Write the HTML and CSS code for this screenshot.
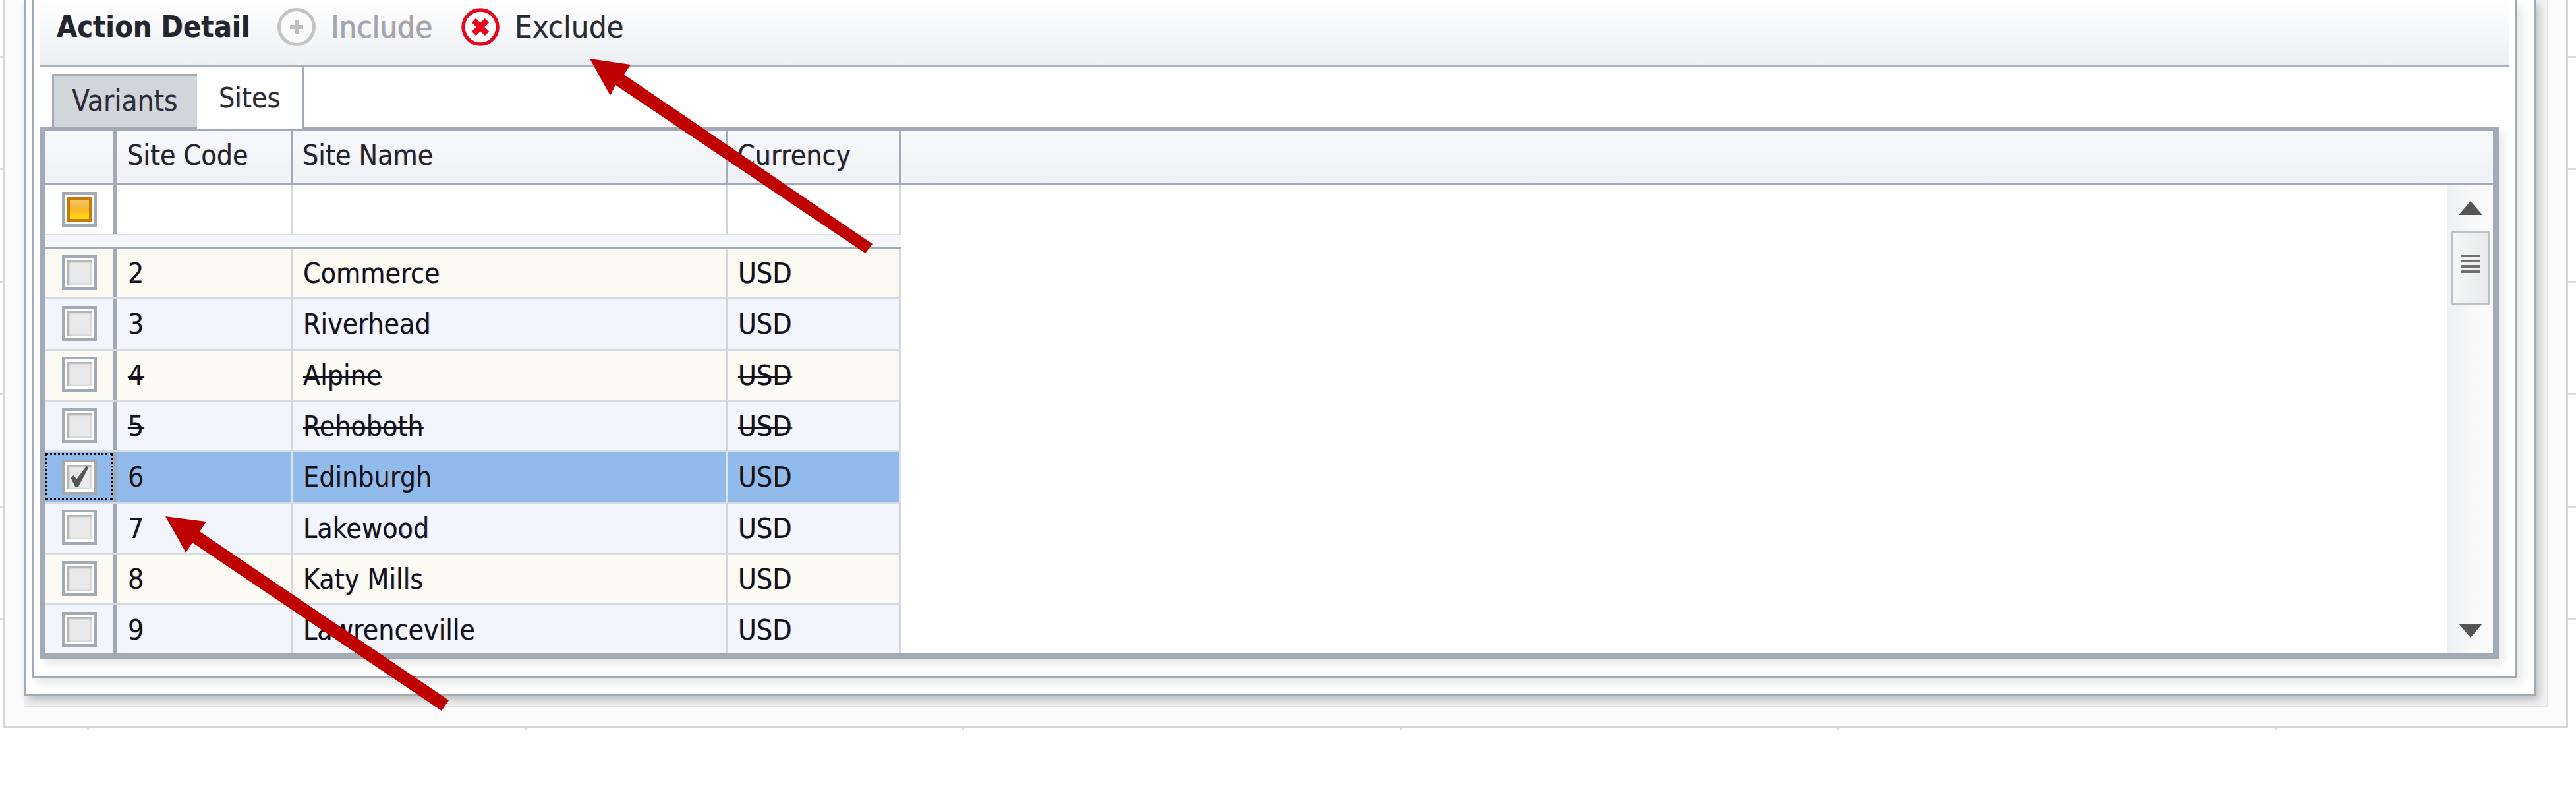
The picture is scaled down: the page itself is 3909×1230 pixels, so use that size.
FILE: index.html
```html
<!DOCTYPE html>
<html lang="en">
<head>
    <meta charset="UTF-8">
    <title>Action Detail</title>
    <link rel="stylesheet" href="styles.css">
</head>
<body>
    <div class="page">
        <div class="frame">
            <div class="band">
                <div class="panelOuter">
                    <div class="panelInner">
                        <div class="toolbar">
                            <span class="toolbarTitle">Action Detail</span>
                            <span class="toolBtn disabled">
                                <svg class="toolIcon" viewBox="0 0 60 60">
                                    <circle cx="30" cy="30" r="26.5" fill="#fafafa" stroke="#c4c4c4" stroke-width="5"/>
                                    <path d="M30 20v20M20 30h20" stroke="#bdbdbd" stroke-width="6" fill="none"/>
                                </svg>
                                Include
                            </span>
                            <span class="toolBtn">
                                <svg class="toolIcon" viewBox="0 0 60 60">
                                    <circle cx="30" cy="30" r="26" fill="#fff" stroke="#e8061f" stroke-width="5.5"/>
                                    <path d="M20 20l20 20M40 20l-20 20" stroke="#e8061f" stroke-width="9" fill="none"/>
                                </svg>
                                Exclude
                            </span>
                        </div>
                        <div class="tabs">
                            <div class="tab">Variants</div>
                            <div class="tab active">Sites</div>
                        </div>
                        <div class="grid">
                            <div class="gridHead">
                                <div class="headCell indicator"></div>
                                <div class="headCell code">Site Code</div>
                                <div class="headCell name">Site Name</div>
                                <div class="headCell currency">Currency</div>
                                <div class="headFill"></div>
                            </div>
                            <div class="gridBody">
                                <div class="rows">
                                    <div class="row filterRow">
                                        <div class="cell indicator"><span class="check mixed"></span></div>
                                        <div class="cell code"></div>
                                        <div class="cell name"></div>
                                        <div class="cell currency"></div>
                                    </div>
                                    <div class="groupBand"></div>
                                    <div class="row odd">
                                        <div class="cell indicator"><span class="check"></span></div>
                                        <div class="cell code">2</div>
                                        <div class="cell name">Commerce</div>
                                        <div class="cell currency">USD</div>
                                    </div>
                                    <div class="row even">
                                        <div class="cell indicator"><span class="check"></span></div>
                                        <div class="cell code">3</div>
                                        <div class="cell name">Riverhead</div>
                                        <div class="cell currency">USD</div>
                                    </div>
                                    <div class="row odd struck">
                                        <div class="cell indicator"><span class="check"></span></div>
                                        <div class="cell code">4</div>
                                        <div class="cell name">Alpine</div>
                                        <div class="cell currency">USD</div>
                                    </div>
                                    <div class="row even struck">
                                        <div class="cell indicator"><span class="check"></span></div>
                                        <div class="cell code">5</div>
                                        <div class="cell name">Rehoboth</div>
                                        <div class="cell currency">USD</div>
                                    </div>
                                    <div class="row selected">
                                        <div class="cell indicator">
                                            <span class="focusBox">
                                                <span class="check">
                                                    <svg class="tick" viewBox="0 0 37 37">
                                                        <path d="M5 19l5-3 4 6L29 2l4 1-16 30h-5z" fill="#54575a"/>
                                                    </svg>
                                                </span>
                                            </span>
                                        </div>
                                        <div class="cell code">6</div>
                                        <div class="cell name">Edinburgh</div>
                                        <div class="cell currency">USD</div>
                                    </div>
                                    <div class="row even">
                                        <div class="cell indicator"><span class="check"></span></div>
                                        <div class="cell code">7</div>
                                        <div class="cell name">Lakewood</div>
                                        <div class="cell currency">USD</div>
                                    </div>
                                    <div class="row odd">
                                        <div class="cell indicator"><span class="check"></span></div>
                                        <div class="cell code">8</div>
                                        <div class="cell name">Katy Mills</div>
                                        <div class="cell currency">USD</div>
                                    </div>
                                    <div class="row even">
                                        <div class="cell indicator"><span class="check"></span></div>
                                        <div class="cell code">9</div>
                                        <div class="cell name">Lawrenceville</div>
                                        <div class="cell currency">USD</div>
                                    </div>
                                </div>
                                <div class="scrollbar">
                                    <div class="scrollArrow up"></div>
                                    <div class="scrollThumb">
                                        <span class="grip"></span>
                                        <span class="grip"></span>
                                        <span class="grip"></span>
                                        <span class="grip"></span>
                                    </div>
                                    <div class="scrollArrow down"></div>
                                </div>
                            </div>
                        </div>
                    </div>
                </div>
            </div>
        </div>
    </div>
    <!-- annotation arrows drawn over the screenshot -->
    <svg class="arrows" viewBox="0 0 3909 1230">
        <polygon points="895,89 957,98 947,113 1324,370 1313,384 934,129 926,145"/>
        <polygon points="251,783 313,791 303,806 681,1062 670,1078 292,823 282,838"/>
    </svg>
</body>
</html>
```

FILE: styles.css
```css
/* Layout of the Action Detail window */
html, body {
    margin: 0;
    background: #fff;
}
body {
    position: relative;
    width: 3909px;
    height: 1230px;
    overflow: hidden;
    font-family: "DejaVu Sans Condensed", "DejaVu Sans", sans-serif;
    font-stretch: condensed;
    font-size: 42.5px;
    line-height: 54px;
    color: #14141e;
    text-shadow: -1px 0 rgba(255, 170, 60, 0.45), 1px 0 rgba(40, 110, 255, 0.45);
}
.page {
    height: 1107px;
    box-sizing: border-box;
    padding: 0 12px 3px 4px;
    filter: blur(0.7px);
    background:
        repeating-linear-gradient(to bottom, transparent 0 85px, #dcdcdc 85px 88px, transparent 88px 170.5px) left top / 100% 1107px,
        repeating-linear-gradient(to right, transparent 0 132px, #dcdcdc 132px 135px, transparent 135px 664px);
}
.frame {
    height: 1104px;
    box-sizing: border-box;
    padding: 0 27px 28px 30px;
    background: #fbfbfb;
    border: 3px solid #d6d6d6;
    border-top: none;
}
.band {
    height: 1073px;
    box-sizing: border-box;
    padding-right: 17px;
    background: #f3f3f3;
    border-right: 2px solid #e2e2e2;
    border-bottom: 3px solid #e2e2e2;
}
.panelOuter {
    height: 1056px;
    box-sizing: border-box;
    padding: 0 25px 24px 9px;
    background: #fff;
    border: 3px solid #a2aab6;
    border-top: none;
    box-shadow: 5px 6px 12px rgba(0, 0, 0, 0.22);
}
.panelInner {
    height: 1029px;
    box-sizing: border-box;
    padding: 0 10px 26px 9px;
    background: #fff;
    border: 3px solid #a2aab6;
    border-top: none;
    box-shadow: 6px 8px 14px rgba(0, 0, 0, 0.1);
}

/* Toolbar */
.toolbar {
    height: 102px;
    box-sizing: border-box;
    display: flex;
    align-items: center;
    padding: 0 0 17px 25px;
    font-size: 47px;
    background: linear-gradient(to bottom, #fff, #eceff3);
    border-bottom: 3px solid #a9b1bb;
}
.toolbarTitle {
    font-size: 44.8px;
    font-weight: bold;
    color: #23262e;
    width: 334px;
    flex: none;
    white-space: nowrap;
}
.toolBtn {
    display: flex;
    align-items: center;
    gap: 22px;
    color: #2a2c34;
    margin-right: 43px;
}
.toolBtn.disabled {
    color: #a5a3ad;
}
.toolIcon {
    width: 60px;
    height: 60px;
}

/* Tabs */
.tabs {
    height: 90px;
    display: flex;
    align-items: flex-end;
    padding-left: 18px;
}
.tab {
    width: 220px;
    height: 80px;
    box-sizing: border-box;
    padding: 10px 0 0 27px;
    font-size: 44px;
    background: #d1d6da;
    border-top: 4px solid #a2aab6;
    border-left: 3px solid #a2aab6;
    color: #2b2d38;
}
.tab.active {
    position: relative;
    width: 163px;
    height: 94px;
    margin-bottom: -4px;
    padding: 20px 0 0 33px;
    font-size: 42.5px;
    background: #fff;
    border-top: none;
    border-left: none;
    border-right: 3px solid #a2aab6;
}

/* Grid */
.grid {
    height: 807px;
    box-sizing: border-box;
    margin-right: 15px;
    display: flex;
    flex-direction: column;
    border: solid #a2aab6;
    border-width: 7px 9px 8px 8px;
    box-shadow: 6px 8px 14px rgba(0, 0, 0, 0.1);
}
.gridHead {
    height: 82px;
    flex: none;
    box-sizing: border-box;
    display: flex;
    background: linear-gradient(to bottom, #f7f8fb, #eef1f5);
    border-bottom: 4px solid #a2aab6;
}
.headCell {
    box-sizing: border-box;
    padding: 10px 0 0 15px;
    border-right: 3px solid #a2aab6;
    color: #24242e;
}
.headFill {
    flex: 1;
}
.indicator {
    width: 109px;
    box-sizing: border-box;
    flex: none;
    border-right: 7px solid #a2aab6 !important;
}
.code {
    width: 266px;
    flex: none;
}
.name {
    width: 660px;
    flex: none;
}
.currency {
    width: 263px;
    flex: none;
}
.gridBody {
    flex: 1;
    min-height: 0;
    display: flex;
}
.rows {
    flex: 1;
    overflow: hidden;
    background: #fff;
}
.row {
    width: 1298px;
    height: 77.33px;
    box-sizing: border-box;
    display: flex;
    border-bottom: 3px solid #d6dae0;
}
.row.odd {
    background: #fbfbf4;
}
.row.even {
    background: #f2f5fb;
}
.row.selected {
    background: #90bbea;
}
.row.filterRow {
    height: 76px;
    border-bottom: 2px solid #dcdfe3;
    background: #fff;
}
.cell {
    box-sizing: border-box;
    padding: 11px 0 0 16px;
    border-right: 3px solid #d3d7db;
}
.cell.indicator {
    display: flex;
    justify-content: center;
    align-items: center;
    padding: 0;
}
.row.selected .cell.code,
.row.selected .cell.name,
.row.selected .cell.currency {
    border-right-color: #dbe3ea;
}
.struck .code,
.struck .name,
.struck .currency {
    text-decoration: line-through;
    text-decoration-thickness: 3px;
}
.groupBand {
    width: 1298px;
    height: 20px;
    box-sizing: border-box;
    background: #f4f6f9;
    border-bottom: 3px solid #a2aab6;
}

/* Checkboxes */
.check {
    width: 53px;
    height: 53px;
    box-sizing: border-box;
    flex: none;
    margin-bottom: 2px;
    display: flex;
    justify-content: center;
    align-items: center;
    background: #fff;
    border: 4px solid #a2aab6;
}
.check::before {
    content: "";
    width: 37px;
    height: 37px;
    background: #e9e9e9;
    box-shadow: inset 3px 3px 2px #b4b4b4, inset -2px -2px 2px #d6d6d6;
}
.check.mixed::before {
    background: linear-gradient(to bottom, #f6cf7e, #f5b52c 50%, #ffe600);
    box-shadow: inset 0 0 0 4px #c97800;
}
.focusBox {
    width: 102px;
    height: 72px;
    box-sizing: border-box;
    display: flex;
    justify-content: center;
    align-items: center;
    border: 3px dotted #000;
}
.focusBox .check {
    position: relative;
    margin: 0;
    border-color: #a8a8a8;
}
.tick {
    position: absolute;
    left: 4px;
    top: 4px;
    width: 37px;
    height: 37px;
}

/* Scrollbar */
.scrollbar {
    width: 69px;
    flex: none;
    box-sizing: border-box;
    display: flex;
    flex-direction: column;
    align-items: center;
    padding: 24px 0 24px;
    background: linear-gradient(to right, #eef0f2, #f9f9f9 60%, #fafafa);
}
.scrollArrow {
    width: 0;
    height: 0;
    border-left: 18px solid transparent;
    border-right: 18px solid transparent;
}
.scrollArrow.up {
    border-bottom: 21px solid #555;
}
.scrollArrow.down {
    margin-top: auto;
    border-top: 21px solid #555;
}
.scrollThumb {
    width: 60px;
    height: 113px;
    box-sizing: border-box;
    margin-top: 24px;
    display: flex;
    flex-direction: column;
    align-items: center;
    justify-content: center;
    gap: 4px;
    padding-bottom: 14px;
    background: linear-gradient(to right, #f4f5f5, #e9eaeb);
    border: 3px solid #bcc1c8;
    border-radius: 5px;
}
.grip {
    width: 29px;
    height: 4px;
    background: #707070;
}

/* Red arrows */
.arrows {
    position: absolute;
    left: 0;
    top: 0;
    width: 3909px;
    height: 1230px;
    fill: #bf0000;
}
```
